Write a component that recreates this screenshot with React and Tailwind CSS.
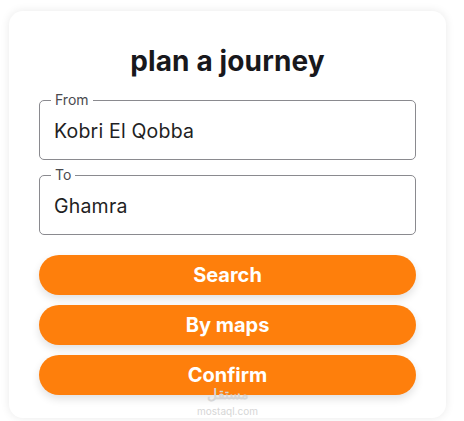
const Field = ({ label, value }) => (
	<div className="relative flex h-[60px] items-center rounded-[5px] border border-[#8a8a8f] px-[14px]">
		<span className="absolute -top-[9px] left-[11px] bg-white px-[4px] text-[14px] leading-[16px] text-[#4a4a4f]">{label}</span>
		<span className="pt-[1px] text-[19.5px] leading-[24px] text-[#1f1f24] tracking-[0.01em]">{value}</span>
	</div>
);

const Btn = ({ children }) => (
	<button className="h-[40px] w-full rounded-full bg-[#fe7f0c] text-[20px] font-bold leading-[24px] text-white shadow-[0_4px_8px_rgba(0,0,0,0.12)]">
		{children}
	</button>
);

export default function App() {
	return (
		<div className="h-[421px] w-[464px] overflow-hidden bg-white pl-[9px] pt-[11px] font-['Inter',sans-serif]">
			<div className="h-[407px] w-[437px] rounded-[14px] bg-white px-[30px] pt-[33px] shadow-[0_0_10px_rgba(0,0,0,0.09)]">
				<h1 className="text-center text-[28px] font-bold leading-[34px] tracking-[0.005em] text-[#18181c]">plan a journey</h1>
				<div className="mt-[22px] flex flex-col gap-[15px]">
					<Field label="From" value="Kobri El Qobba" />
					<Field label="To" value="Ghamra" />
				</div>
				<div className="mt-[20px] flex flex-col gap-[10px]">
					<Btn>Search</Btn>
					<Btn>By maps</Btn>
					<Btn>Confirm</Btn>
				</div>
				<div className="mt-[-9px] flex flex-col items-center text-[#d6d6d6]">
					<span className="text-[14px] font-bold leading-[16px] font-['Noto_Sans',sans-serif]">مستقل</span>
					<span className="mt-[5px] text-[10px] leading-[9px]">mostaql.com</span>
				</div>
			</div>
		</div>
	);
}
